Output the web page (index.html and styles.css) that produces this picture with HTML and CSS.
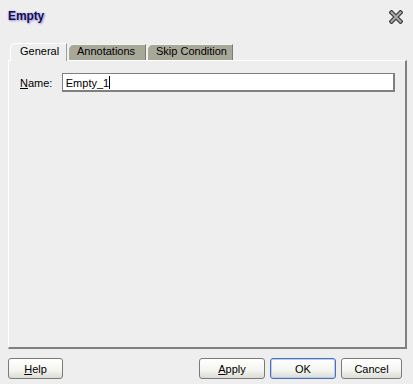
FILE: index.html
```html
<!DOCTYPE html>
<html lang="en">
<head>
    <meta charset="UTF-8">
    <title>Empty</title>
    <link rel="stylesheet" href="styles.css">
</head>
<body>
    <div class="dialog">
        <!-- Title bar -->
        <div class="header">
            <div class="title">Empty</div>
            <svg class="close" width="14" height="14" viewBox="0 0 14 14">
                <path d="M2.5 2.5 L11.5 11.5 M11.5 2.5 L2.5 11.5" stroke="#3a3a3a" stroke-width="4.4" stroke-linecap="square"/>
                <path d="M2.5 2.5 L11.5 11.5 M11.5 2.5 L2.5 11.5" stroke="#a8a8a8" stroke-width="2" stroke-linecap="square"/>
            </svg>
        </div>

        <!-- Tabs -->
        <div class="tabs">
            <div class="tab tab-general active">General</div>
            <div class="tab tab-annotations">Annotations</div>
            <div class="tab tab-skip">Skip Condition</div>
        </div>

        <div class="panel">
            <div class="field">
                <label class="field-label"><u>N</u>ame:</label>
                <div class="field-input">Empty_1<span class="caret"></span></div>
            </div>
        </div>

        <!-- Buttons -->
        <div class="buttons">
            <button class="btn btn-help"><u>H</u>elp</button>
            <div class="btn-group">
                <button class="btn btn-apply"><u>A</u>pply</button>
                <button class="btn btn-ok">OK</button>
                <button class="btn btn-cancel">Cancel</button>
            </div>
        </div>
    </div>
</body>
</html>
```

FILE: styles.css
```css
* {
    margin: 0;
    padding: 0;
    box-sizing: border-box;
}

body, html {
    height: 100%;
}

body {
    font-family: "Liberation Sans", Arial, sans-serif;
    font-size: 11px;
    color: #000;
    background-color: #eeeeee;
}

.dialog {
    width: 413px;
    height: 384px;
    padding: 0 6px 0 8px;
    display: flex;
    flex-direction: column;
}

/* Barra de titulo */
.header {
    height: 42px;
    display: flex;
    justify-content: space-between;
    align-items: flex-start;
    padding-top: 9px;
}

.title {
    font-size: 12px;
    font-weight: bold;
    color: #10104a;
    text-shadow: 0 0 2px #b8b0f0, 1px 1px 2px #9890e0;
    letter-spacing: -0.1px;
}

.close {
    margin-top: 1px;
    margin-right: 4px;
}

/* Abas */
.tabs {
    display: flex;
    align-items: flex-end;
    gap: 1px;
    padding-left: 2px;
    height: 18px;
}

.tab {
    height: 16px;
    padding-left: 8px;
    line-height: 13px;
    white-space: nowrap;
    background-color: #a8a898;
    border-top: 1px solid #f4f4f4;
    border-left: 1px solid #f4f4f4;
    border-right: 1px solid #7c7c74;
    border-top-left-radius: 5px 6px;
}

.tab-general {
    width: 57px;
}

.tab-annotations {
    width: 78px;
}

.tab-skip {
    width: 86px;
}

.tab.active {
    height: 18px;
    line-height: 15px;
    padding-left: 9px;
    background-color: #eeeeee;
    border-top-color: #ffffff;
    border-left-color: #ffffff;
    border-right-color: #a0a0a0;
    margin-bottom: -1px;
    position: relative;
    z-index: 1;
}

.panel {
    height: 289px;
    border-top: 1px solid #ffffff;
    border-left: 1px solid #ffffff;
    border-right: 2px solid #808080;
    border-bottom: 2px solid #808080;
    padding: 12px 10px 0 10px;
}

.field {
    display: flex;
    align-items: center;
}

.field-label {
    width: 43px;
    padding-left: 1px;
}

.field-input {
    width: 335px;
    height: 19px;
    background-color: #fff;
    border: 1px solid #7f7f7f;
    border-right-width: 2px;
    border-bottom-width: 2px;
    padding: 2px 3px;
    line-height: 14px;
    font-size: 11px;
}

.caret {
    display: inline-block;
    width: 1px;
    height: 13px;
    background-color: #000;
    vertical-align: -2px;
}

/* Botoes */
.buttons {
    display: flex;
    justify-content: space-between;
    margin-top: 9px;
    padding-right: 5px;
}

.btn-group {
    display: flex;
    gap: 5px;
}

.btn {
    height: 21px;
    font-family: "Liberation Sans", Arial, sans-serif;
    font-size: 11px;
    color: #000;
    background: linear-gradient(#ffffff, #f4f4f0 60%, #dcdcd6);
    border: 1px solid #7a7a7a;
    border-radius: 3px;
}

.btn-help {
    width: 55px;
}

.btn-apply {
    width: 66px;
}

.btn-ok {
    width: 66px;
    border-color: #4c70b8;
    box-shadow: inset 0 0 0 1px #b8cdf0;
}

.btn-cancel {
    width: 61px;
}
```
